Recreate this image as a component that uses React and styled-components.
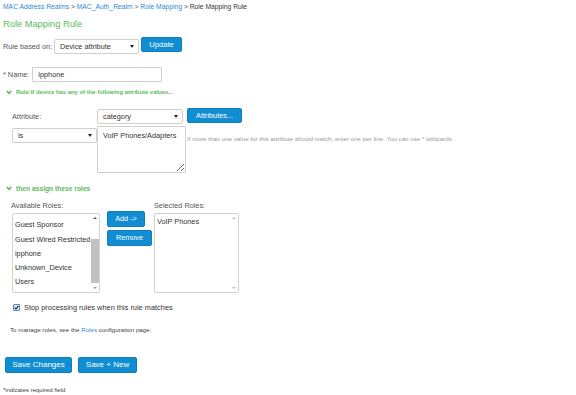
import React from "react";
import styled, { createGlobalStyle } from "styled-components";

const GlobalStyle = createGlobalStyle`
  html, body {
    margin: 0;
    padding: 0;
    background: #fff;
  }
  body {
    font-family: "Liberation Sans", Arial, sans-serif;
    color: #444;
  }
`;

const green = "#5cbb5c";
const blue = "#118dd1";

const Page = styled.div`
  width: 576px;
  height: 395px;
  box-sizing: border-box;
  padding-left: 3px;
  overflow: hidden;
`;

const Breadcrumb = styled.div`
  margin-top: 3px;
  height: 8px;
  line-height: 8px;
  font-size: 6.75px;
  color: #555;
  white-space: nowrap;
  a {
    color: #2d8bd3;
    text-decoration: none;
  }
  span {
    color: #333;
  }
`;

const Title = styled.h1`
  margin: 7px 0 0;
  height: 12px;
  line-height: 12px;
  font-size: 9.3px;
  font-weight: normal;
  color: ${green};
`;

const Row = styled.div`
  display: flex;
  align-items: flex-start;
  margin-top: ${(p) => p.$mt || 0}px;
  margin-left: ${(p) => p.$ml || 0}px;
  gap: ${(p) => p.$gap || 0}px;
`;

const Label = styled.div`
  font-size: 7.3px;
  line-height: 15px;
  color: #555;
  width: ${(p) => (p.$w ? p.$w + "px" : "auto")};
  margin-top: ${(p) => p.$mt || 0}px;
  white-space: nowrap;
`;

const SelectBox = styled.div`
  box-sizing: border-box;
  width: ${(p) => p.$w}px;
  height: 15px;
  margin-top: ${(p) => p.$mt || 0}px;
  border: 1px solid #cfcfcf;
  border-radius: 2px;
  background: #fff;
  display: flex;
  align-items: center;
  justify-content: space-between;
  padding: 0 4px 0 5px;
  font-size: 7.3px;
  color: #333;
`;

const Caret = styled.i`
  width: 0;
  height: 0;
  border-left: 2px solid transparent;
  border-right: 2px solid transparent;
  border-top: 3px solid #222;
`;

const Button = styled.button`
  box-sizing: border-box;
  width: ${(p) => p.$w}px;
  height: ${(p) => p.$h || 15}px;
  margin-top: ${(p) => p.$mt || 0}px;
  margin-left: ${(p) => p.$ml || 0}px;
  padding: 0;
  border: 1px solid #0b7fbf;
  border-radius: 2px;
  background: ${blue};
  color: #fff;
  font-family: inherit;
  font-size: ${(p) => p.$fs || 7.3}px;
  line-height: 1;
  cursor: pointer;
`;

const TextInput = styled.div`
  box-sizing: border-box;
  width: ${(p) => p.$w}px;
  height: 15px;
  border: 1px solid #cfcfcf;
  border-radius: 1px;
  padding-left: 5px;
  font-size: 7.3px;
  line-height: 13px;
  color: #333;
`;

const SectionHead = styled.div`
  display: flex;
  align-items: center;
  gap: 4px;
  margin-top: ${(p) => p.$mt}px;
  margin-left: 3px;
  height: 8px;
  font-size: ${(p) => p.$fs}px;
  font-weight: bold;
  color: ${green};
  white-space: nowrap;
`;

const ValuesArea = styled.textarea`
  box-sizing: border-box;
  width: 89px;
  height: 47px;
  margin: 0;
  padding: 4px 5px;
  border: 1px solid #cfcfcf;
  border-radius: 1px;
  font-family: inherit;
  font-size: 7.3px;
  line-height: 9px;
  color: #333;
  resize: both;
  outline: none;
`;

const Hint = styled.div`
  margin-top: 9px;
  margin-left: 1px;
  font-size: 6.2px;
  line-height: 8px;
  color: #999;
  white-space: nowrap;
`;

const RolesWrap = styled.div`
  display: flex;
  margin-top: 10px;
  margin-left: 8px;
`;

const RoleCol = styled.div`
  display: flex;
  flex-direction: column;
  margin-left: ${(p) => p.$ml || 0}px;
`;

const ButtonCol = styled.div`
  display: flex;
  flex-direction: column;
  gap: 3px;
  padding-top: 9px;
  margin-left: 7px;
`;

const ListLabel = styled.div`
  height: 8px;
  line-height: 8px;
  font-size: 7.3px;
  color: #555;
  white-space: nowrap;
`;

const ListBox = styled.div`
  box-sizing: border-box;
  width: ${(p) => p.$w}px;
  height: 80px;
  margin-top: 3px;
  margin-left: ${(p) => p.$ml || 0}px;
  border: 1px solid #d3d3d3;
  border-radius: 2px;
  display: flex;
  overflow: hidden;
  background: #fff;
`;

const Items = styled.div`
  flex: 1;
  overflow: hidden;
  padding-left: 2px;
`;

const ItemsInner = styled.div`
  margin-top: ${(p) => p.$offset}px;
`;

const Item = styled.div`
  height: 14.3px;
  line-height: 14.3px;
  font-size: 7.3px;
  color: #333;
  white-space: nowrap;
`;

const ScrollBar = styled.div`
  width: 8px;
  display: flex;
  flex-direction: column;
  align-items: center;
  background: #fff;
`;

const Arrow = styled.i`
  flex: none;
  width: 0;
  height: 0;
  margin: 3px 0;
  border-left: 2px solid transparent;
  border-right: 2px solid transparent;
  ${(p) =>
    p.$up
      ? `border-bottom: 2px solid ${p.$dim ? "#bbb" : "#555"};`
      : `border-top: 2px solid ${p.$dim ? "#bbb" : "#999"};`}
`;

const Track = styled.div`
  flex: 1;
  width: 8px;
  display: flex;
  flex-direction: column;
`;

const Thumb = styled.div`
  margin-top: ${(p) => p.$top}px;
  height: ${(p) => p.$h}px;
  background: #c1c1c1;
`;

const CheckRow = styled.label`
  display: flex;
  align-items: center;
  gap: 4px;
  margin-top: 9px;
  margin-left: 10px;
  height: 10px;
  font-size: 7.4px;
  color: #333;
`;

const Check = styled.span`
  box-sizing: border-box;
  width: 7px;
  height: 7px;
  border: 1px solid #5a8ac6;
  border-radius: 1px;
  background: #dbe7f5;
  display: flex;
  align-items: center;
  justify-content: center;
`;

const Note = styled.div`
  margin-top: ${(p) => p.$mt}px;
  margin-left: ${(p) => p.$ml || 0}px;
  height: 8px;
  line-height: 8px;
  font-size: ${(p) => p.$fs || 6.2}px;
  color: #444;
  white-space: nowrap;
  a {
    color: #2d8bd3;
    text-decoration: none;
  }
`;

const Footer = styled.div`
  display: flex;
  gap: 6px;
  margin-top: 23px;
  margin-left: 2px;
`;

function Chevron() {
  return (
    <svg width="6" height="5" viewBox="0 0 6 5">
      <polyline points="0.8,1 3,3.4 5.2,1" fill="none" stroke={green} strokeWidth="1.6" />
    </svg>
  );
}

function Select({ value, w, mt }) {
  return (
    <SelectBox $w={w} $mt={mt}>
      <span>{value}</span>
      <Caret />
    </SelectBox>
  );
}

function RoleList({ items, w, ml, offset, thumb }) {
  return (
    <ListBox $w={w} $ml={ml}>
      <Items>
        <ItemsInner $offset={offset}>
          {items.map((it) => (
            <Item key={it}>{it}</Item>
          ))}
        </ItemsInner>
      </Items>
      <ScrollBar>
        <Arrow $up $dim={!thumb} />
        <Track>{thumb && <Thumb $top={thumb.top} $h={thumb.h} />}</Track>
        <Arrow $dim={!thumb} />
      </ScrollBar>
    </ListBox>
  );
}

const available = [
  "Guest Admin",
  "Guest Sponsor",
  "Guest Wired Restricted",
  "ipphone",
  "Unknown_Device",
  "Users",
];

export default function App() {
  return (
    <Page>
      <GlobalStyle />
      <Breadcrumb>
        <a href="#">MAC Address Realms</a> &gt; <a href="#">MAC_Auth_Realm</a> &gt;{" "}
        <a href="#">Role Mapping</a> &gt; <span>Role Mapping Rule</span>
      </Breadcrumb>
      <Title>Role Mapping Rule</Title>

      <Row $mt={7} $gap={2}>
        <Label $mt={2}>Rule based on:</Label>
        <Select value="Device attribute" w={85} mt={2} />
        <Button $w={41} $fs={7.6}>Update</Button>
      </Row>

      <Row $mt={13} $gap={3}>
        <Label>* Name:</Label>
        <TextInput $w={130}>ipphone</TextInput>
      </Row>

      <SectionHead $mt={6} $fs={5.9}>
        <Chevron />
        Rule:If device has any of the following attribute values...
      </SectionHead>

      <Row $mt={12} $ml={9}>
        <Label $w={85} $mt={1}>Attribute:</Label>
        <Select value="category" w={86} mt={1} />
        <Button $w={55} $ml={4}>Attributes...</Button>
      </Row>

      <Row $mt={2} $ml={9}>
        <Select value="is" w={85} mt={2} />
        <ValuesArea readOnly defaultValue="VoIP Phones/Adapters" />
        <Hint>If more than one value for this attribute should match, enter one per line. You can use * wildcards.</Hint>
      </Row>

      <SectionHead $mt={11} $fs={6.7}>
        <Chevron />
        then assign these roles
      </SectionHead>

      <RolesWrap>
        <RoleCol>
          <ListLabel>Available Roles:</ListLabel>
          <RoleList items={available} w={88} ml={1} offset={-10} thumb={{ top: 17, h: 44 }} />
        </RoleCol>
        <ButtonCol>
          <Button $w={38} $h={16}>Add -&gt;</Button>
          <Button $w={45} $h={16}>Remove</Button>
        </ButtonCol>
        <RoleCol $ml={2}>
          <ListLabel>Selected Roles:</ListLabel>
          <RoleList items={["VoIP Phones"]} w={85} offset={1} />
        </RoleCol>
      </RolesWrap>

      <CheckRow>
        <Check>
          <svg width="5" height="5" viewBox="0 0 5 5">
            <polyline points="0.6,2.6 2,4 4.4,0.8" fill="none" stroke="#222" strokeWidth="1.1" />
          </svg>
        </Check>
        Stop processing rules when this rule matches
      </CheckRow>

      <Note $mt={14} $ml={7}>
        To manage roles, see the <a href="#">Roles</a> configuration page.
      </Note>

      <Footer>
        <Button $w={67} $h={16} $fs={8}>Save Changes</Button>
        <Button $w={59} $h={16} $fs={8}>Save + New</Button>
      </Footer>

      <Note $mt={13} $fs={6}>*indicates required field</Note>
    </Page>
  );
}
